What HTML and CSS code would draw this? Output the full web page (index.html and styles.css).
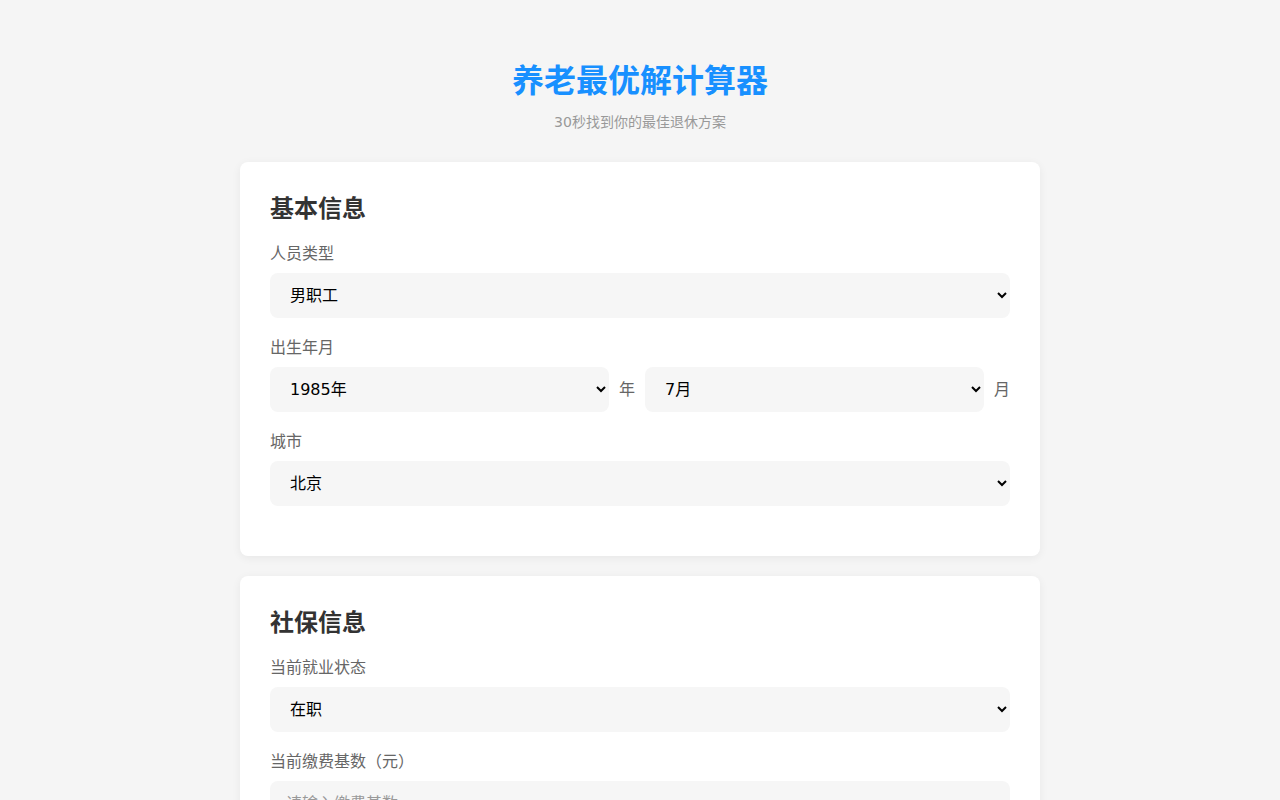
FILE: index.html
```html
<!DOCTYPE html>
<html lang="zh-CN">
<head>
<meta charset="utf-8">
<title>养老最优解计算器</title>
<link rel="stylesheet" href="styles.css">
</head>
<body>
<div class="container">
  <header class="header">
    <h1 class="title">养老最优解计算器</h1>
    <p class="subtitle">30秒找到你的最佳退休方案</p>
  </header>

  <section class="card">
    <h2 class="card-title">基本信息</h2>
    <div class="form-group">
      <label class="label">人员类型</label>
      <select class="field">
        <option selected>男职工</option>
        <option>女职工（50岁退休）</option>
        <option>女干部（55岁退休）</option>
      </select>
    </div>
    <div class="form-group">
      <label class="label">出生年月</label>
      <div class="date-row">
        <select class="field">
          <option>1984年</option>
          <option selected>1985年</option>
          <option>1986年</option>
        </select>
        <span class="unit">年</span>
        <select class="field">
          <option>6月</option>
          <option selected>7月</option>
          <option>8月</option>
        </select>
        <span class="unit">月</span>
      </div>
    </div>
    <div class="form-group">
      <label class="label">城市</label>
      <select class="field">
        <option selected>北京</option>
        <option>上海</option>
        <option>广州</option>
        <option>深圳</option>
      </select>
    </div>
  </section>

  <section class="card">
    <h2 class="card-title">社保信息</h2>
    <div class="form-group">
      <label class="label">当前就业状态</label>
      <select class="field">
        <option selected>在职</option>
        <option>灵活就业</option>
        <option>失业</option>
      </select>
    </div>
    <div class="form-group">
      <label class="label">当前缴费基数（元）</label>
      <input class="field" type="number" placeholder="请输入缴费基数">
    </div>
    <div class="form-group">
      <label class="label">已缴费年限（年）</label>
      <input class="field" type="number" placeholder="请输入已缴费年限">
    </div>
  </section>
</div>
</body>
</html>
```

FILE: styles.css
```css
* {
  box-sizing: border-box;
}

body {
  margin: 0;
  background: #f5f5f5;
  font-family: "DejaVu Sans", "Noto Sans CJK SC", sans-serif;
  color: #333;
}

.container {
  width: 800px;
  margin: 0 auto;
  padding: 59px 0 40px;
}

.header {
  text-align: center;
  margin-bottom: 30px;
}

.title {
  margin: 0;
  font-size: 32px;
  line-height: 44px;
  font-weight: bold;
  color: #1890ff;
}

.subtitle {
  margin: 9px 0 0;
  font-size: 14px;
  line-height: 20px;
  color: #999;
}

.card {
  background: #fff;
  border-radius: 8px;
  padding: 30px;
  margin-bottom: 20px;
  box-shadow: 0 2px 10px rgba(0, 0, 0, 0.06);
}

.card-title {
  margin: 0 0 18px;
  font-size: 24px;
  line-height: 34px;
  font-weight: bold;
  color: #333;
}

.form-group {
  margin-bottom: 20px;
}

.label {
  display: block;
  font-size: 16px;
  line-height: 19px;
  color: #666;
  margin-bottom: 10px;
}

.field {
  display: block;
  width: 100%;
  height: 45px;
  padding: 12px 16px;
  border: none;
  border-radius: 8px;
  background: #f6f6f6;
  font-family: "DejaVu Sans", "Noto Sans CJK SC", sans-serif;
  font-size: 16px;
  color: #000;
  outline: none;
}

.field::placeholder {
  color: #999;
}

.date-row {
  display: flex;
  align-items: center;
  gap: 10px;
}

.date-row .field {
  flex: 1;
  min-width: 0;
}

.unit {
  width: 16px;
  font-size: 16px;
  line-height: 16px;
  color: #666;
  flex: none;
}
```
